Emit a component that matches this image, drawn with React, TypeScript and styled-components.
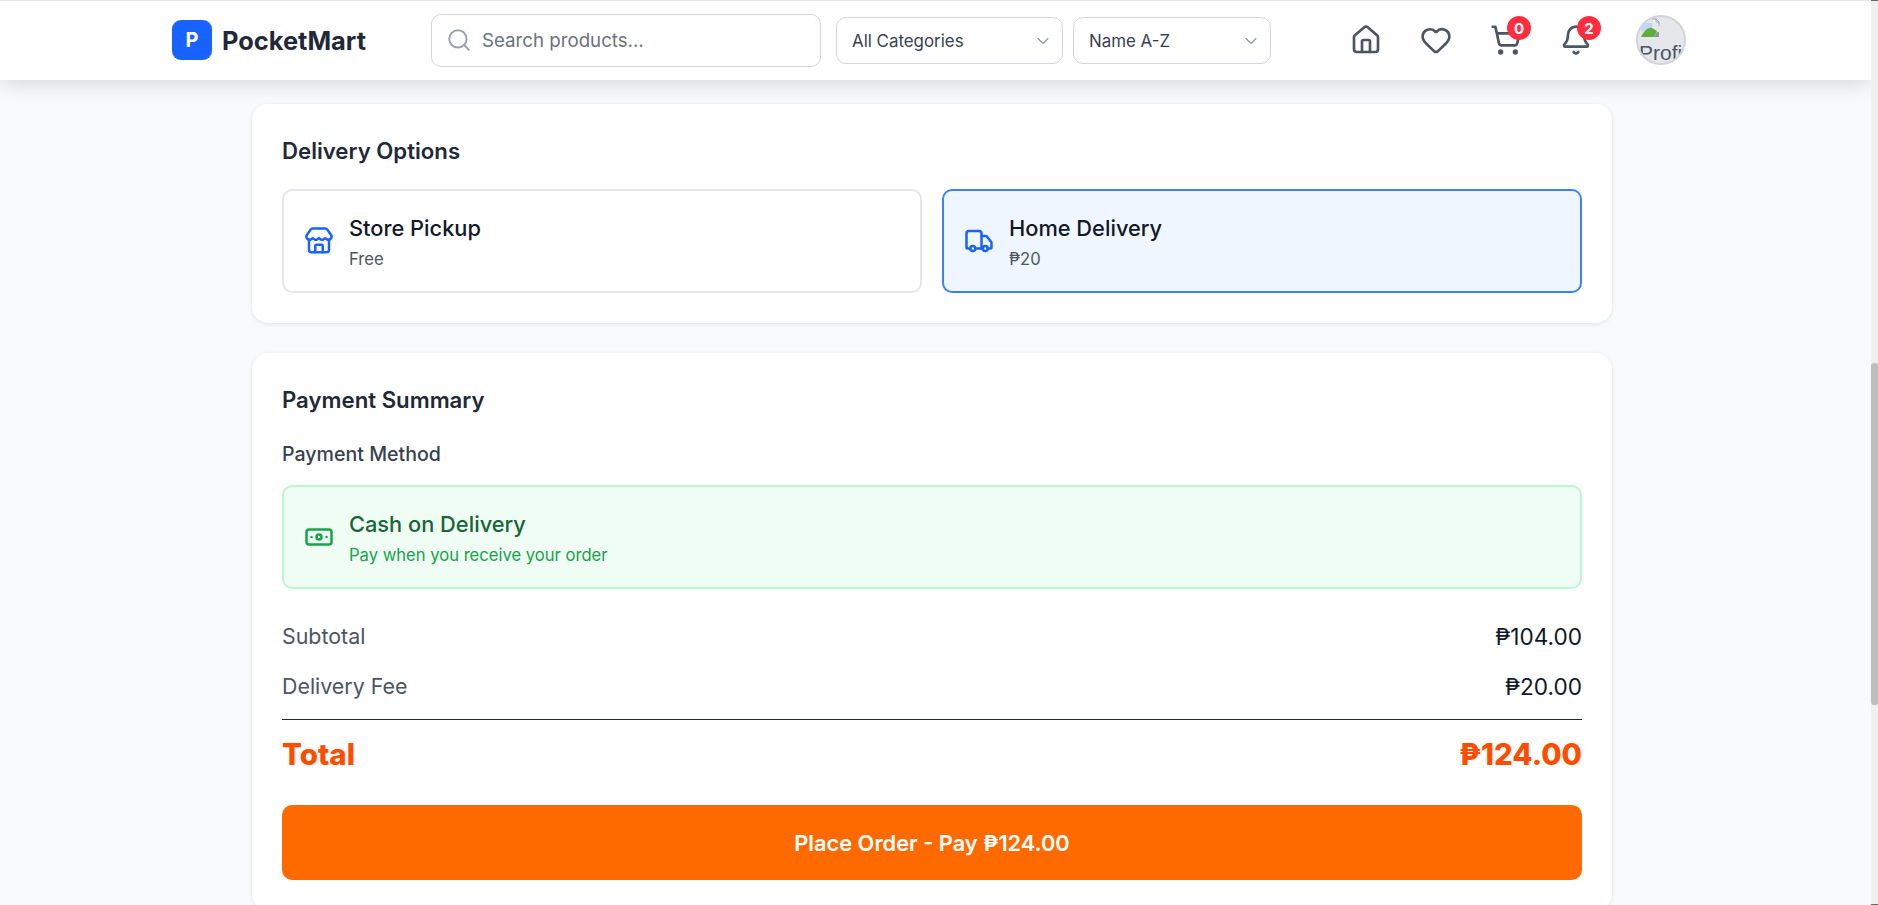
import React from 'react';
import styled, { createGlobalStyle } from 'styled-components';
import {
  Banknote,
  Bell,
  ChevronDown,
  Heart,
  House,
  Search,
  ShoppingCart,
  Store,
  Truck,
} from 'lucide-react';

const GlobalStyle = createGlobalStyle`
  html, body {
    margin: 0;
    height: 100%;
    overflow: hidden;
  }
  body {
    font-family: Inter, "Noto Sans", "DejaVu Sans", sans-serif;
    background: #f9fafb;
    color: #111827;
  }
  * {
    box-sizing: border-box;
  }
`;

const Shell = styled.div`
  display: flex;
  height: 905px;
  overflow: hidden;
`;

const Viewport = styled.div`
  flex: 1;
  min-width: 0;
  overflow: hidden;
`;

const ScrollTrack = styled.div`
  width: 7px;
  height: 905px;
  background: #f0f0f0;
  padding-top: 362px;
  border-top: 1px solid #666;
  border-bottom: 1px solid #666;
`;

const ScrollThumb = styled.div`
  height: 342px;
  background: #bdbdbd;
  border-radius: 3px;
`;

const Header = styled.header`
  display: flex;
  align-items: center;
  height: 80px;
  padding: 0 0 1px 172px;
  background: #fff;
  border-top: 1px solid #e5e7eb;
  box-shadow: 0 4px 20px rgba(0, 0, 0, 0.14);
  position: relative;
`;

const Brand = styled.div`
  display: flex;
  align-items: center;
  gap: 10px;
  width: 259px;
`;

const LogoMark = styled.div`
  display: flex;
  align-items: center;
  justify-content: center;
  width: 40px;
  height: 40px;
  border-radius: 9px;
  background: #1863ff;
  color: #fff;
  font-size: 20px;
  font-weight: 700;
`;

const BrandName = styled.span`
  font-size: 25.4px;
  font-weight: 700;
  color: #1f2937;
`;

const SearchBox = styled.div`
  display: flex;
  align-items: center;
  gap: 10px;
  width: 390px;
  height: 53px;
  padding: 0 14px;
  border: 1px solid #d1d5db;
  border-radius: 10px;
  color: #9ca3af;
`;

const SearchText = styled.span`
  font-size: 18.7px;
  color: #6b7280;
`;

const SelectBox = styled.div<{ $width: number; $gap: number }>`
  display: flex;
  align-items: center;
  justify-content: space-between;
  width: ${(p) => p.$width}px;
  height: 47px;
  margin-left: ${(p) => p.$gap}px;
  padding: 1px 9px 0 15px;
  border: 1px solid #d1d5db;
  border-radius: 10px;
  font-size: 16.9px;
  color: #374151;
`;

const NavIcons = styled.nav`
  display: flex;
  align-items: center;
  margin-left: 60px;
`;

const NavButton = styled.div`
  position: relative;
  display: flex;
  justify-content: center;
  width: 70px;
  height: 32px;
  color: #4b5563;
`;

const Badge = styled.span`
  position: absolute;
  top: -8px;
  left: 36px;
  display: flex;
  align-items: center;
  justify-content: center;
  width: 24px;
  height: 24px;
  border-radius: 50%;
  background: #ff2d3d;
  color: #fff;
  font-size: 15px;
  font-weight: 700;
`;

const Avatar = styled.div`
  width: 50px;
  height: 50px;
  margin-left: 25px;
  padding-left: 1px;
  border: 2px solid #d1d5db;
  border-radius: 50%;
  background: #e5e7eb;
  overflow: hidden;
  font-family: "Liberation Sans", sans-serif;
  font-size: 21px;
  line-height: 24px;
  color: #4b5563;
  white-space: nowrap;
`;

const BrokenImage = styled.svg`
  display: block;
  margin: 0 0 2px;
`;

const Content = styled.main`
  display: flex;
  flex-direction: column;
  gap: 30px;
  width: 1360px;
  margin-left: 252px;
  padding-top: 24px;
`;

const Card = styled.section`
  padding: 30px;
  background: #fff;
  border-radius: 16px;
  box-shadow: 0 1px 4px rgba(0, 0, 0, 0.1);
`;

const CardTitle = styled.h2`
  margin: 0;
  font-size: 22.2px;
  line-height: 34px;
  font-weight: 600;
  color: #1f2937;
`;

const OptionGrid = styled.div`
  display: grid;
  grid-template-columns: 1fr 1fr;
  gap: 20px;
  margin-top: 21px;
`;

const OptionCard = styled.div<{ $tone: 'plain' | 'blue' | 'green' }>`
  display: flex;
  align-items: center;
  gap: 15px;
  height: 104px;
  padding: 0 20px;
  border-radius: 10px;
  border: 2px solid
    ${(p) =>
      p.$tone === 'blue' ? '#3b82f6' : p.$tone === 'green' ? '#bbf7d0' : '#e5e7eb'};
  background: ${(p) =>
    p.$tone === 'blue' ? '#eff6ff' : p.$tone === 'green' ? '#f0fdf4' : '#fff'};
  color: ${(p) => (p.$tone === 'green' ? '#16a34a' : '#1863ff')};
`;

const OptionText = styled.div`
  display: flex;
  flex-direction: column;
  gap: 7px;
`;

const OptionName = styled.div<{ $green?: boolean }>`
  font-size: 21.8px;
  line-height: 28px;
  font-weight: 450;
  color: ${(p) => (p.$green ? '#166534' : '#111827')};
`;

const OptionNote = styled.div<{ $green?: boolean }>`
  font-size: 16.6px;
  line-height: 20px;
  color: ${(p) => (p.$green ? '#16a34a' : '#4b5563')};
`;

const MethodLabel = styled.div`
  margin-top: 25px;
  margin-bottom: 19px;
  font-size: 19.6px;
  line-height: 24px;
  font-weight: 500;
  color: #374151;
`;

const SummaryRow = styled.div`
  display: flex;
  justify-content: space-between;
  align-items: center;
  height: 50px;
  font-size: 22.6px;
`;

const SummaryRows = styled.div`
  margin-top: 22px;
`;

const RowLabel = styled.span`
  font-size: 21.4px;
  color: #4b5563;
`;

const TotalRow = styled.div`
  display: flex;
  justify-content: space-between;
  align-items: center;
  margin-top: 8px;
  padding-top: 13px;
  border-top: 1px solid #1f2937;
  font-size: 29.5px;
  line-height: 42px;
  font-weight: 800;
  color: #ff4d00;
`;

const PlaceOrder = styled.button`
  display: block;
  width: 100%;
  height: 75px;
  margin-top: 30px;
  border: 0;
  border-radius: 10px;
  background: #ff6a00;
  color: #fff;
  font-family: inherit;
  font-size: 21.8px;
  font-weight: 600;
`;

const App = () => {
  return (
    <Shell>
      <GlobalStyle />
      <Viewport>
        <Header>
          <Brand>
            <LogoMark>P</LogoMark>
            <BrandName>PocketMart</BrandName>
          </Brand>
          <SearchBox>
            <Search size={26} strokeWidth={1.8} />
            <SearchText>Search products...</SearchText>
          </SearchBox>
          <SelectBox $width={227} $gap={15}>
            All Categories
            <ChevronDown size={20} strokeWidth={1.3} color="#8b93a1" />
          </SelectBox>
          <SelectBox $width={198} $gap={10}>
            Name A-Z
            <ChevronDown size={20} strokeWidth={1.3} color="#8b93a1" />
          </SelectBox>
          <NavIcons>
            <NavButton>
              <House size={32} strokeWidth={2} />
            </NavButton>
            <NavButton>
              <Heart size={32} strokeWidth={2} />
            </NavButton>
            <NavButton>
              <ShoppingCart size={32} strokeWidth={2} />
              <Badge>0</Badge>
            </NavButton>
            <NavButton>
              <Bell size={32} strokeWidth={2} />
              <Badge>2</Badge>
            </NavButton>
            <Avatar>
              <BrokenImage width="22" height="22" viewBox="0 0 22 22">
                <path d="M13 2h4l3 3v4" fill="#fff" stroke="#9ca3af" strokeWidth="1" />
                <path d="M17 2v3h3" fill="none" stroke="#9ca3af" strokeWidth="1" />
                <path d="M2 6h11v5L2 15z" fill="#bcd8f5" />
                <path d="M2 20c3-6 7-10 11-9l5 3-3 6z" fill="#5fae3a" />
                <path d="M18 15h2v5h-5z" fill="#8f939a" />
              </BrokenImage>
              Profile
            </Avatar>
          </NavIcons>
        </Header>
        <Content>
          <Card>
            <CardTitle>Delivery Options</CardTitle>
            <OptionGrid>
              <OptionCard $tone="plain">
                <Store size={30} />
                <OptionText>
                  <OptionName>Store Pickup</OptionName>
                  <OptionNote>Free</OptionNote>
                </OptionText>
              </OptionCard>
              <OptionCard $tone="blue">
                <Truck size={30} />
                <OptionText>
                  <OptionName>Home Delivery</OptionName>
                  <OptionNote>₱20</OptionNote>
                </OptionText>
              </OptionCard>
            </OptionGrid>
          </Card>
          <Card>
            <CardTitle>Payment Summary</CardTitle>
            <MethodLabel>Payment Method</MethodLabel>
            <OptionCard $tone="green">
              <Banknote size={30} />
              <OptionText>
                <OptionName $green>Cash on Delivery</OptionName>
                <OptionNote $green>Pay when you receive your order</OptionNote>
              </OptionText>
            </OptionCard>
            <SummaryRows>
              <SummaryRow>
                <RowLabel>Subtotal</RowLabel>
                <span>₱104.00</span>
              </SummaryRow>
              <SummaryRow>
                <RowLabel>Delivery Fee</RowLabel>
                <span>₱20.00</span>
              </SummaryRow>
            </SummaryRows>
            <TotalRow>
              <span>Total</span>
              <span>₱124.00</span>
            </TotalRow>
            <PlaceOrder>Place Order - Pay ₱124.00</PlaceOrder>
          </Card>
        </Content>
      </Viewport>
      <ScrollTrack>
        <ScrollThumb />
      </ScrollTrack>
    </Shell>
  );
};

export default App;
